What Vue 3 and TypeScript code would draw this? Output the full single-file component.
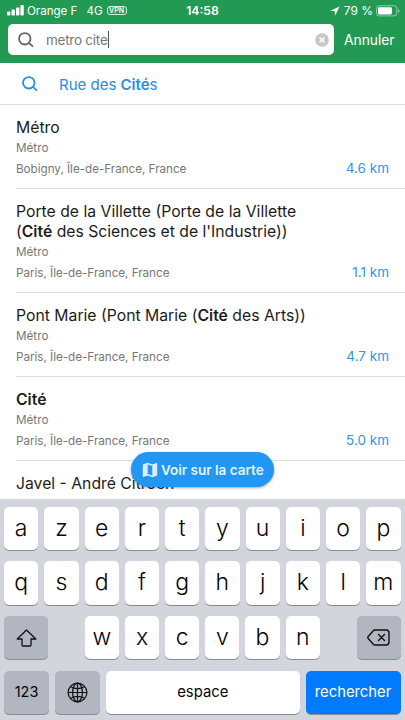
<script setup lang="ts">
interface Part { text: string; bold?: boolean }
interface Place { lines: Part[][]; kind?: string; area?: string; distance?: string }

const places: Place[] = [
  { lines: [[{ text: 'Métro' }]], kind: 'Métro', area: 'Bobigny, Île-de-France, France', distance: '4.6 km' },
  {
    lines: [
      [{ text: 'Porte de la Villette (Porte de la Villette' }],
      [{ text: '(' }, { text: 'Cité', bold: true }, { text: " des Sciences et de l'Industrie))" }],
    ],
    kind: 'Métro', area: 'Paris, Île-de-France, France', distance: '1.1 km',
  },
  {
    lines: [[{ text: 'Pont Marie (Pont Marie (' }, { text: 'Cité', bold: true }, { text: ' des Arts))' }]],
    kind: 'Métro', area: 'Paris, Île-de-France, France', distance: '4.7 km',
  },
  { lines: [[{ text: 'Cité', bold: true }]], kind: 'Métro', area: 'Paris, Île-de-France, France', distance: '5.0 km' },
  { lines: [[{ text: 'Javel - André Citroën' }]] },
]
const letterRows: string[][] = ['azertyuiop'.split(''), 'qsdfghjklm'.split('')]
const bottomLetters: string[] = 'wxcvbn'.split('')
</script>

<template>
  <div class="screen">
    <header class="top">
      <div class="status">
        <div class="carrier">
          <svg class="bars" width="18" height="11" viewBox="0 0 18 11" fill="#fff">
            <rect x="0" y="6.5" width="3.4" height="4" rx="1" /><rect x="4.5" y="4.6" width="3.4" height="5.9" rx="1" />
            <rect x="9" y="2.4" width="3.4" height="8.1" rx="1" /><rect x="13.4" y="0" width="3.4" height="10.5" rx="1" />
          </svg>
          <span class="operator">Orange F</span><span class="network">4G</span><span class="vpn">VPN</span>
        </div>
        <span class="time">14:58</span>
        <div class="power">
          <svg width="10" height="10" viewBox="0 0 10 10"><path d="M9.6.4.3 4.8l4.5.5.2 4.4z" fill="#fff" /></svg>
          <span class="percent">79 %</span>
          <svg class="battery" width="24" height="12" viewBox="0 0 24 12">
            <rect x=".5" y=".7" width="20.3" height="10.2" rx="2.8" fill="none" stroke="#fff" stroke-opacity=".5" />
            <rect x="2" y="2.2" width="14" height="7.2" rx="1.4" fill="#fff" />
            <path d="M22 4q1.5.3 1.5 1.8T22 7.6z" fill="#fff" fill-opacity=".5" />
          </svg>
        </div>
      </div>
      <div class="search">
        <div class="field">
          <svg class="lens" width="16" height="16" viewBox="0 0 17 17" fill="none" stroke="#666" stroke-width="1.9">
            <circle cx="7.2" cy="7.2" r="6.1" /><path d="m11.6 11.6 4.3 4" />
          </svg>
          <span class="query">metro cite</span><i class="caret"></i>
          <svg class="clear" width="14" height="14" viewBox="0 0 14 14">
            <circle cx="7" cy="7" r="6.8" fill="#c7c7c9" /><path d="m4.6 4.6 4.8 4.8m0-4.8L4.6 9.4" stroke="#fff" stroke-width="1.7" />
          </svg>
        </div>
        <span class="cancel">Annuler</span>
      </div>
    </header>

    <main class="results">
      <div class="suggestion">
        <svg width="16" height="16" viewBox="0 0 17 17" fill="none" stroke="#248fe6" stroke-width="1.9">
          <circle cx="7.2" cy="7.2" r="6.1" /><path d="m11.6 11.6 4.3 4" />
        </svg>
        <span>Rue des <b>Cité</b>s</span>
      </div>
      <article v-for="(place, i) in places" :key="i" class="place" :class="{ tall: place.lines.length > 1 }">
        <h2><span v-for="(line, j) in place.lines" :key="j" class="line"><span v-for="(part, k) in line" :key="k" :class="{ bold: part.bold }">{{ part.text }}</span></span></h2>
        <div v-if="place.kind" class="kind">{{ place.kind }}</div>
        <div v-if="place.area" class="foot"><span class="area">{{ place.area }}</span><span class="distance">{{ place.distance }}</span></div>
      </article>
      <button class="map">
        <svg width="16" height="16" viewBox="0 0 16 16">
          <path d="M.8 2.4 5.6.8l5 1.7 4.6-1.7v12.8l-4.6 1.7-5-1.7-4.8 1.7z" fill="#d9efff" />
          <path d="m5.7 2.5 4.6 1.6v9.4l-4.6-1.6z" fill="#2196f3" />
        </svg>
        <span>Voir sur la carte</span>
      </button>
    </main>

    <section class="keyboard">
      <div v-for="(row, i) in letterRows" :key="i" class="keys">
        <div v-for="letter in row" :key="letter" class="key">{{ letter }}</div>
      </div>
      <div class="keys third">
        <div class="key dark side">
          <svg width="21" height="18" viewBox="0 0 21 18" fill="none" stroke="#111" stroke-width="1.3" stroke-linejoin="round"><path d="M10.5 1 19.8 10H15v6q0 1-1 1H7q-1 0-1-1v-6H1.2z" /></svg>
        </div>
        <div class="center"><div v-for="letter in bottomLetters" :key="letter" class="key">{{ letter }}</div></div>
        <div class="key dark side">
          <svg width="23" height="17" viewBox="0 0 23 17" fill="none" stroke="#111" stroke-width="1.4" stroke-linejoin="round" stroke-linecap="round"><path d="M8 1h11q3 0 3 3v9q0 3-3 3H8q-1 0-1.7-.8L1.2 9.5q-.8-1 0-2l5.1-5.7Q7 1 8 1z" /><path d="m11.5 5.5 6 6m0-6-6 6" /></svg>
        </div>
      </div>
      <div class="keys fourth">
        <div class="key dark num">123</div>
        <div class="key dark globe">
          <svg width="21" height="21" viewBox="0 0 21 21" fill="none" stroke="#111" stroke-width="1.2"><circle cx="10.5" cy="10.5" r="9.4" /><ellipse cx="10.5" cy="10.5" rx="4.9" ry="9.4" /><path d="M10.5 1v19M1 10.5h19M3.4 4.7q7.1 3.7 14.2 0M3.4 16.3q7.1-3.7 14.2 0" /></svg>
        </div>
        <div class="key space">espace</div>
        <div class="key go">rechercher</div>
      </div>
    </section>
  </div>
</template>

<style>
body { margin: 0; overflow: hidden; }
</style>

<style scoped>
* { box-sizing: border-box; }
.screen { width: 405px; height: 720px; display: flex; flex-direction: column; background: #fff; font-family: Inter, "Liberation Sans", sans-serif; overflow: hidden; }
svg { display: block; flex: none; }
.top { height: 63px; flex: none; background: #239a53; color: #fff; }
.status { height: 24px; display: grid; grid-template-columns: 1fr auto 1fr; align-items: center; padding: 0 5px 3px 7px; font-size: 12px; line-height: 18px; }
.carrier, .power { display: flex; align-items: center; white-space: nowrap; }
.operator { margin-left: 2px; font-size: 11.6px; letter-spacing: -.02px; }
.network { margin-left: 9px; font-size: 11.6px; }
.vpn { margin-left: 4px; border: 1px solid #d4efde; border-radius: 3px; width: 20px; height: 9px; font-size: 7px; line-height: 7px; font-weight: 600; text-align: center; }
.time { font-weight: 600; font-size: 12.2px; margin-left: -2px; }
.power { justify-content: flex-end; }
.percent { margin: 0 3px 0 4px; }
.search { display: flex; align-items: center; padding-left: 8px; }
.field { width: 326px; height: 31px; display: flex; align-items: center; border-radius: 5px; background: #fff; padding: 0 5px 0 10px; }
.query { margin-left: 12px; font-size: 13.5px; color: #777; letter-spacing: -.25px; }
.caret { width: 1px; height: 17px; background: #555; }
.clear { margin-left: auto; }
.cancel { margin-left: 10px; font-size: 13.8px; }
.results { position: relative; height: 435.5px; flex: none; overflow: hidden; }
.suggestion { height: 42px; display: flex; align-items: center; gap: 21px; padding-left: 22px; border-bottom: 1px solid #dedede; color: #248fe6; font-size: 15px; }
.suggestion span { padding-top: 1px; }
.suggestion b { font-weight: 600; }
.place { margin-left: 16px; padding: 13px 16px 0 0; border-bottom: 1px solid #dedede; height: 84px; }
.place.tall { height: 104px; }
h2 { margin: 0; font-size: 15.75px; line-height: 19.5px; font-weight: 400; color: #1c1c1c; letter-spacing: 0; }
.line { display: block; white-space: pre; }
.bold { font-weight: 600; }
.kind { font-size: 11.7px; line-height: 16px; margin-top: 2px; color: #777; }
.tall .kind { margin-top: 2.5px; }
.foot { display: flex; justify-content: space-between; align-items: center; height: 18px; margin-top: 4.5px; }
.area { font-size: 11.7px; color: #777; letter-spacing: -.03px; }
.distance { font-size: 13.5px; color: #3496e2; padding-bottom: 2px; }
.map { position: absolute; left: 131px; top: 389px; width: 143px; height: 35px; border: 0; border-radius: 18px; background: #2196f3; color: #e4f4ff; display: flex; align-items: center; padding: 0 0 0 11px; gap: 3px; font: 600 13.5px Inter, sans-serif; white-space: nowrap; box-shadow: 0 1px 3px rgba(0,0,0,.35); }
.keyboard { flex: 1; background: #d2d5db; padding: 8.2px 4.5px 0 4px; display: flex; flex-direction: column; gap: 11.1px; color: #050505; }
.keys { display: flex; gap: 6px; height: 43.6px; }
.key { flex: 1 1 0; min-width: 0; height: 43.3px; border-radius: 5px; background: #fff; box-shadow: 0 1px 0 #898b90; display: flex; justify-content: center; align-items: center; font-size: 23px; font-weight: 350; line-height: 28px; padding-bottom: 1.5px; }
.third { justify-content: space-between; }
.key.side { flex: 0 0 44px; padding: 0; }
.key.dark { background: #b1b6c1; }
.center { width: 235px; display: flex; gap: 6px; }
.key.num { flex: 0 0 45px; font-size: 14.5px; font-weight: 400; padding: 0; }
.key.globe { flex: 0 0 45px; padding: 0; }
.key.space { font-size: 14.8px; font-weight: 400; padding-bottom: 1px; }
.key.go { flex: 0 0 95px; background: #007aff; color: #fff; font-size: 14.8px; font-weight: 400; padding-bottom: 1px; }
</style>
